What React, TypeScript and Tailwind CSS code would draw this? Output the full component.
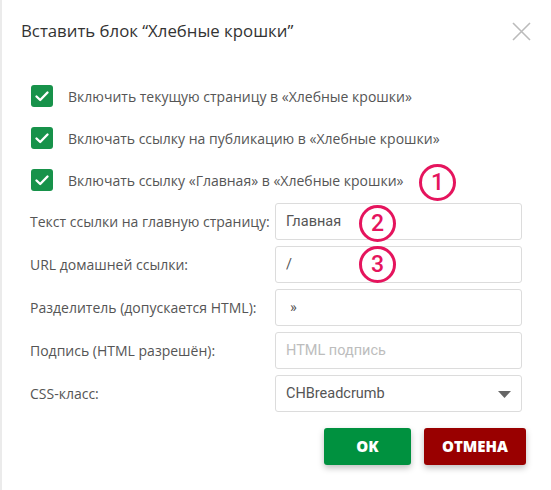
import { useState } from "react";

type Check = { id: string; label: string };

const checks: Check[] = [
  { id: "current", label: "Включить текущую страницу в «Хлебные крошки»" },
  { id: "pub", label: "Включать ссылку на публикацию в «Хлебные крошки»" },
  { id: "home", label: "Включать ссылку «Главная» в «Хлебные крошки»" },
];

function Marker({ n, className }: { n: number; className: string }) {
  return (
    <div
      className={`absolute w-[37px] h-[37px] rounded-full border-[3px] border-[#e5145d] flex items-center justify-center text-[#e5145d] text-[23px] font-medium leading-none font-['Roboto',sans-serif] ${className}`}
    >
      {n}
    </div>
  );
}

export default function App() {
  const [checked, setChecked] = useState<Record<string, boolean>>({ current: true, pub: true, home: true });
  const [homeText, setHomeText] = useState("Главная");
  const [homeUrl, setHomeUrl] = useState("/");
  const [separator, setSeparator] = useState("»");
  const [caption, setCaption] = useState("");

  const inputCls =
    "w-[247px] h-[37px] border border-[#dcdcdc] rounded-[3px] px-[10px] text-[14.5px] text-[#555] font-['Roboto',sans-serif] outline-none placeholder:text-[#bdbdbd]";

  return (
    <div className="relative w-[551px] h-[490px] bg-white border-l-2 border-[#ebebeb] font-['Open_Sans',sans-serif] text-[#555]">
      {/* Header */}
      <div className="h-[62px] flex items-center justify-between pl-[19px] pr-[20px]">
        <h2 className="text-[16.8px] text-[#333]">Вставить блок “Хлебные крошки”</h2>
        <button className="text-[#bbb]">
          <svg width="19" height="19" viewBox="0 0 19 19" fill="none" stroke="currentColor" strokeWidth="1.6">
            <path d="M1 1 L18 18 M18 1 L1 18" />
          </svg>
        </button>
      </div>

      {/* Checkboxes */}
      <div className="mt-[13px] pl-[29px] flex flex-col">
        {checks.map(c => (
          <label key={c.id} className="h-[42px] flex items-center cursor-pointer">
            <span
              onClick={() => setChecked({ ...checked, [c.id]: !checked[c.id] })}
              className={`w-[22px] h-[22px] rounded-[3px] flex items-center justify-center ${checked[c.id] ? "bg-[#17924a]" : "border border-[#ccc]"}`}
            >
              {checked[c.id] && (
                <svg width="16" height="16" viewBox="0 0 16 16" fill="none" stroke="white" strokeWidth="2.4" strokeLinecap="round" strokeLinejoin="round">
                  <path d="M2.5 8.5 L6.2 12 L13.5 4.5" />
                </svg>
              )}
            </span>
            <span className="ml-[15px] text-[14px]">{c.label}</span>
          </label>
        ))}
      </div>

      {/* Form rows */}
      <div className="mt-[2px] flex flex-col gap-[6px]">
        <div className="flex items-center">
          <span className="w-[273px] pl-[28px] text-[14px]">Текст ссылки на главную страницу:</span>
          <input className={inputCls} value={homeText} onChange={e => setHomeText(e.target.value)} />
        </div>
        <div className="flex items-center">
          <span className="w-[273px] pl-[28px] text-[14px]">URL домашней ссылки:</span>
          <input className={inputCls} value={homeUrl} onChange={e => setHomeUrl(e.target.value)} />
        </div>
        <div className="flex items-center">
          <span className="w-[273px] pl-[28px] text-[14px]">Разделитель (допускается HTML):</span>
          <input className={`${inputCls} pl-[14px]`} value={separator} onChange={e => setSeparator(e.target.value)} />
        </div>
        <div className="flex items-center">
          <span className="w-[273px] pl-[28px] text-[14px]">Подпись (HTML разрешён):</span>
          <input className={inputCls} placeholder="HTML подпись" value={caption} onChange={e => setCaption(e.target.value)} />
        </div>
        <div className="flex items-center">
          <span className="w-[273px] pl-[28px] text-[14px]">CSS-класс:</span>
          <div className="relative w-[247px] h-[37px] border border-[#dcdcdc] rounded-[3px] flex items-center px-[10px] text-[14.5px] text-[#555] font-['Roboto',sans-serif]">
            CHBreadcrumb
            <svg className="absolute right-[10px] top-[15px]" width="13" height="7" viewBox="0 0 13 7" fill="#666">
              <path d="M0 0 H13 L6.5 7 Z" />
            </svg>
          </div>
        </div>
      </div>

      {/* Buttons */}
      <div className="mt-[16px] flex justify-end gap-[13px] pr-[25px]">
        <button className="w-[87px] h-[37px] rounded-[3px] bg-[#00913f] text-white font-extrabold text-[15px] shadow-[0_3px_6px_rgba(0,0,0,0.25)]">
          OK
        </button>
        <button className="w-[102px] h-[37px] rounded-[3px] bg-[#990000] text-white font-extrabold text-[15px] shadow-[0_3px_6px_rgba(0,0,0,0.25)]">
          ОТМЕНА
        </button>
      </div>

      <Marker n={1} className="left-[417px] top-[164px]" />
      <Marker n={2} className="left-[357px] top-[205px]" />
      <Marker n={3} className="left-[357px] top-[246px]" />
    </div>
  );
}
